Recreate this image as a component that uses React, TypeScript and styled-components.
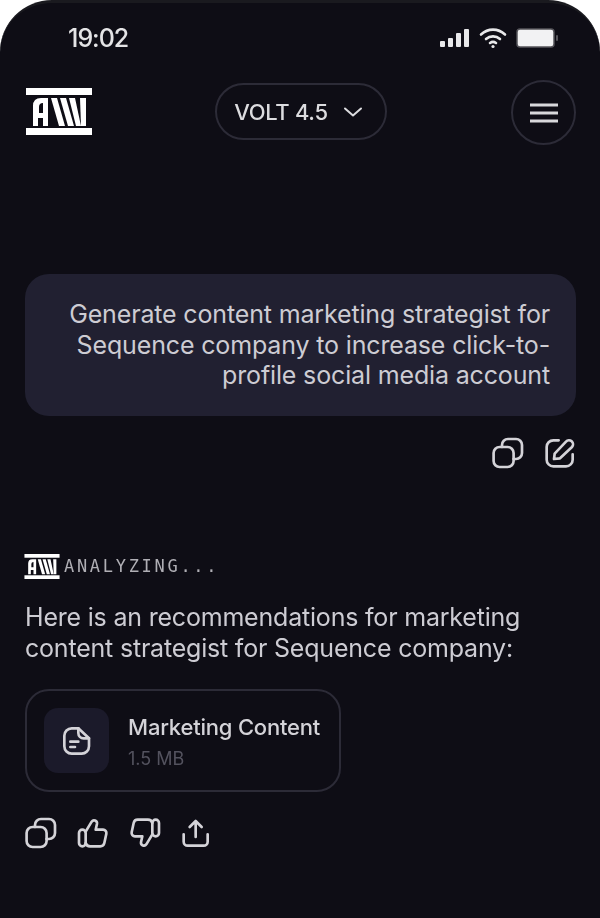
import React from "react";
import styled, { createGlobalStyle } from "styled-components";

const Global = createGlobalStyle`
  html, body { margin: 0; padding: 0; background: #fff; }
  body { font-family: Inter, "Liberation Sans", sans-serif; }
`;

const Phone = styled.div`
  width: 600px;
  height: 918px;
  box-sizing: border-box;
  overflow: hidden;
  background: #0e0d15;
  border-radius: 52px 52px 0 0;
  border-top: 3px solid #1a1a1f;
  padding: 0 24px 0 25px;
  display: flex;
  flex-direction: column;
  color: #d0cfd4;
  filter: blur(0.4px);
`;

const StatusBar = styled.div`
  height: 77px;
  display: flex;
  align-items: flex-start;
  justify-content: space-between;
  padding: 21px 16px 0 43px;
  box-sizing: border-box;
`;

const Time = styled.span`
  font-size: 25px;
  line-height: 28px;
  font-weight: 500;
  letter-spacing: -1px;
  color: #e4e4e6;
`;

const StatusIcons = styled.div`
  display: flex;
  align-items: center;
  gap: 9px;
  height: 28px;
`;

const Header = styled.header`
  display: flex;
  align-items: center;
  justify-content: space-between;
  height: 65px;
`;

const LogoSlot = styled.div`
  margin: 0 0 3px 1px;
`;

const ModelPill = styled.button`
  width: 172px;
  height: 57px;
  box-sizing: border-box;
  border: 2px solid #2c2b37;
  border-radius: 29px;
  background: transparent;
  color: #dcdcdf;
  font: 500 22px Inter, sans-serif;
  letter-spacing: -0.3px;
  display: flex;
  align-items: center;
  justify-content: center;
  gap: 14px;
  padding: 0 3px 0 0;
  margin: 0 0 2px -2px;
`;

const MenuButton = styled.button`
  width: 65px;
  height: 65px;
  box-sizing: border-box;
  border: 2px solid #2c2b37;
  border-radius: 50%;
  background: transparent;
  display: flex;
  align-items: center;
  justify-content: center;
  padding: 0;
`;

const UserBubble = styled.div`
  margin-top: 129px;
  height: 142px;
  box-sizing: border-box;
  border-radius: 24px;
  background: #212031;
  padding: 25px 26px 0 30px;
  text-align: right;
  font-size: 25px;
  line-height: 30.5px;
  letter-spacing: -0.15px;
  color: #cdccd3;
`;

const BubbleActions = styled.div`
  display: flex;
  justify-content: flex-end;
  gap: 20px;
  margin-top: 21px;
`;

const StatusLine = styled.div`
  margin-top: 84px;
  display: flex;
  align-items: center;
  gap: 4px;
  height: 26px;
  margin-left: -1px;
`;

const MonoLabel = styled.span`
  font-family: "DejaVu Sans Mono", "Liberation Mono", monospace;
  font-size: 17px;
  letter-spacing: 2.7px;
  color: #b0afb5;
`;

const Reply = styled.p`
  margin: 23px 0 0;
  font-size: 25px;
  line-height: 31px;
  letter-spacing: -0.2px;
  color: #cdccd3;
`;

const FileCard = styled.div`
  margin-top: 25px;
  width: 316px;
  height: 103px;
  box-sizing: border-box;
  border: 2px solid #2c2b37;
  border-radius: 24px;
  display: flex;
  align-items: center;
  gap: 19px;
  padding-left: 17px;
`;

const FileIcon = styled.div`
  width: 65px;
  height: 65px;
  border-radius: 14px;
  background: #1b1a2a;
  display: flex;
  align-items: center;
  justify-content: center;
`;

const FileText = styled.div`
  display: flex;
  flex-direction: column;
  gap: 6px;
  padding-top: 2px;
`;

const FileName = styled.span`
  font-size: 22px;
  line-height: 27px;
  font-weight: 500;
  letter-spacing: -0.2px;
  color: #d4d3d8;
`;

const FileSize = styled.span`
  font-size: 18px;
  line-height: 23px;
  color: #53525e;
`;

const ReplyActions = styled.div`
  margin-top: 25px;
  display: flex;
  align-items: center;
  gap: 20px;
`;

const IconSvg = styled.svg`
  display: block;
  fill: none;
  stroke: #d4d3d8;
  stroke-width: 2;
  stroke-linecap: round;
  stroke-linejoin: round;
`;

const Logo = ({ w, h }: { w: number; h: number }) => (
  <svg width={w} height={h} viewBox="0 0 66 47" fill="#fff" style={{ display: "block" }}>
    <rect x="0" y="0" width="66" height="7" />
    <rect x="0" y="40" width="66" height="7" />
    <path d="M7 38 L7 18 Q7 10 15 10 L22 10 L22 38 L17 38 L17 30 L12 30 L12 38 Z M13 25 L17 25 L17 15 Q13 15 13 19 Z" fillRule="evenodd" />
    <path d="M25 10 L31 10 L39 38 L33 38 Z" />
    <path d="M34 10 L40 10 L48 38 L42 38 Z" />
    <path d="M43 10 L49 10 L55 38 L50 38 Z" />
    <path d="M54 10 L60 10 L60 38 L55 38 Z" />
  </svg>
);

const CopyIcon = () => (
  <IconSvg width="32" height="32" viewBox="0 0 24 24">
    <rect x="1.2" y="7.5" width="15" height="15" rx="4.5" />
    <path d="M7.5 7.5 V6 A4.5 4.5 0 0 1 12 1.5 H18 A4.5 4.5 0 0 1 22.5 6 V12 A4.5 4.5 0 0 1 18 16.5 H16.2" />
  </IconSvg>
);

const EditIcon = () => (
  <IconSvg width="32" height="32" viewBox="0 0 24 24">
    <path d="M11 2.5 H7 A5 5 0 0 0 2 7.5 V17 A5 5 0 0 0 7 22 H16.5 A5 5 0 0 0 21.5 17 V13" />
    <path d="M7.5 16.5 L8 12.5 L16.5 3.5 A2.8 2.8 0 0 1 21 7.5 L12 16 Z" />
  </IconSvg>
);

const FileGlyph = () => (
  <IconSvg width="32" height="32" viewBox="0 0 24 24">
    <path d="M8 2.5 H13 L21 10 V16 A5.5 5.5 0 0 1 15.5 21.5 H8 A5.5 5.5 0 0 1 2.5 16 V8 A5.5 5.5 0 0 1 8 2.5 Z" />
    <path d="M13 2.5 V6 A4 4 0 0 0 17 10 H21" />
    <path d="M7 12.5 H13 M7 16.5 H10.5" />
  </IconSvg>
);

const ThumbUp = () => (
  <IconSvg width="32" height="32" viewBox="0 0 24 24">
    <rect x="1.5" y="9.5" width="5" height="12.5" rx="2.5" />
    <path d="M6.5 11 L11 3.5 A2.2 2.2 0 0 1 15 5 L14 9.5 H19.5 A2.5 2.5 0 0 1 22 12.5 L20.5 19.5 A3.2 3.2 0 0 1 17.3 22 H10 A3.5 3.5 0 0 1 6.5 19.5" />
  </IconSvg>
);

const ThumbDown = () => (
  <IconSvg width="32" height="32" viewBox="0 0 24 24">
    <rect x="17.5" y="2" width="5" height="12.5" rx="2.5" />
    <path d="M17.5 13 L13 20.5 A2.2 2.2 0 0 1 9 19 L10 14.5 H4.5 A2.5 2.5 0 0 1 2 11.5 L3.5 4.5 A3.2 3.2 0 0 1 6.7 2 H14 A3.5 3.5 0 0 1 17.5 4.5" />
  </IconSvg>
);

const ShareIcon = () => (
  <IconSvg width="32" height="32" viewBox="1 0 24 24">
    <path d="M12 15 V3 M7.5 7.5 L12 3 L16.5 7.5" />
    <path d="M3 13 V18.5 A3 3 0 0 0 6 21.5 H18 A3 3 0 0 0 21 18.5 V13" />
  </IconSvg>
);

export default function App() {
  return (
    <>
      <Global />
      <Phone>
        <StatusBar>
          <Time>19:02</Time>
          <StatusIcons>
            <svg width="30" height="20" viewBox="0 0 30 20" fill="#e8e8ea">
              <rect x="0" y="13" width="5" height="6" rx="1" />
              <rect x="8" y="10" width="5" height="9" rx="1" />
              <rect x="16" y="5" width="5" height="14" rx="1" />
              <rect x="24" y="1" width="5" height="18" rx="1" />
            </svg>
            <svg width="28" height="22" viewBox="0 0 28 22" fill="none" stroke="#e8e8ea" strokeWidth="2.6" strokeLinecap="round">
              <path d="M2 7.5 C9 1 19 1 26 7.5" />
              <path d="M7 12 C11 8.5 17 8.5 21 12" />
              <path d="M11 16 C13 14.6 15 14.6 17 16" />
              <circle cx="14" cy="19.5" r="1.6" fill="#e8e8ea" stroke="none" />
            </svg>
            <svg width="44" height="20" viewBox="0 0 44 20">
              <rect x="1" y="1" width="37" height="18" rx="3" fill="#f2f2f3" stroke="#55545a" strokeWidth="1.5" />
              <rect x="40" y="7" width="2" height="6" rx="1" fill="#55545a" />
            </svg>
          </StatusIcons>
        </StatusBar>
        <Header>
          <LogoSlot>
            <Logo w={66} h={47} />
          </LogoSlot>
          <ModelPill>
            VOLT 4.5
            <svg width="22" height="22" viewBox="0 0 22 22" fill="none" stroke="#dcdcdf" strokeWidth="2" strokeLinecap="round" strokeLinejoin="round">
              <path d="M3 7.5 L11 14.5 L19 7.5" />
            </svg>
          </ModelPill>
          <MenuButton aria-label="Menu">
            <svg width="30" height="24" viewBox="0 0 30 24" fill="none" stroke="#d8d8db" strokeWidth="3">
              <path d="M1 4 H29 M1 12 H29 M1 20 H29" />
            </svg>
          </MenuButton>
        </Header>
        <UserBubble>
          Generate content marketing strategist for Sequence company to increase click-to-profile social media account
        </UserBubble>
        <BubbleActions>
          <CopyIcon />
          <EditIcon />
        </BubbleActions>
        <StatusLine>
          <Logo w={36} h={25} />
          <MonoLabel>ANALYZING...</MonoLabel>
        </StatusLine>
        <Reply>
          Here is an recommendations for marketing content strategist for Sequence company:
        </Reply>
        <FileCard>
          <FileIcon>
            <FileGlyph />
          </FileIcon>
          <FileText>
            <FileName>Marketing Content</FileName>
            <FileSize>1.5 MB</FileSize>
          </FileText>
        </FileCard>
        <ReplyActions>
          <CopyIcon />
          <ThumbUp />
          <ThumbDown />
          <ShareIcon />
        </ReplyActions>
      </Phone>
    </>
  );
}
